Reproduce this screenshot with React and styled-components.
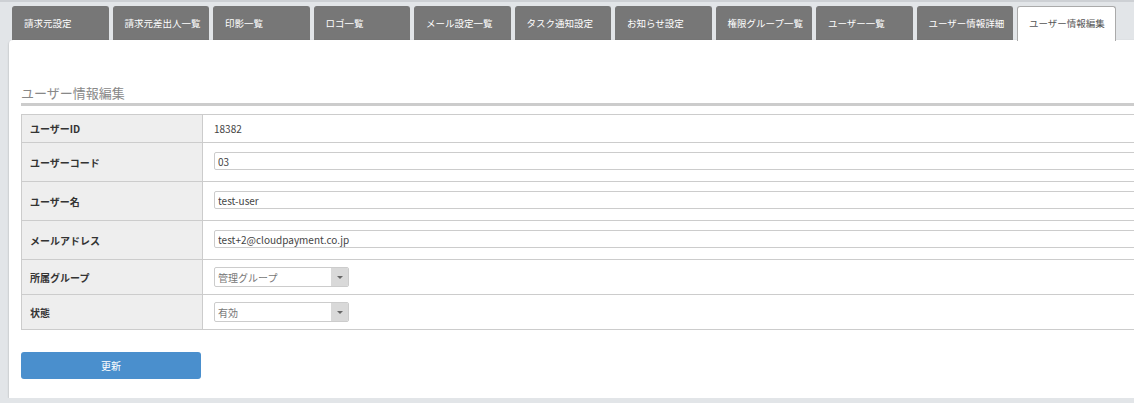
import styled, { createGlobalStyle } from "styled-components";

const GlobalStyle = createGlobalStyle`
  html, body {
    margin: 0;
    padding: 0;
    background: #e2e5e8;
    overflow: hidden;
  }
  body {
    font-family: "Noto Sans CJK JP", "Noto Sans", sans-serif;
    color: #333;
    border-top: 2px solid #cdd0d4;
  }
`;

const tabs = [
  "請求元設定",
  "請求元差出人一覧",
  "印影一覧",
  "ロゴ一覧",
  "メール設定一覧",
  "タスク通知設定",
  "お知らせ設定",
  "権限グループ一覧",
  "ユーザー一覧",
  "ユーザー情報詳細",
  "ユーザー情報編集",
];

export default function App() {
  return (
    <>
      <GlobalStyle />
      <StyledPage>
        <StyledTabBar>
          {tabs.map((tab, i) => (
            <StyledTab key={tab} $active={i === tabs.length - 1}>
              {tab}
            </StyledTab>
          ))}
        </StyledTabBar>
        <StyledPanel>
          <StyledHeading>ユーザー情報編集</StyledHeading>
          <StyledTable>
            <tbody>
              <StyledRow $height={28}>
                <StyledLabel>ユーザーID</StyledLabel>
                <StyledValue>18382</StyledValue>
              </StyledRow>
              <StyledRow $height={39}>
                <StyledLabel>ユーザーコード</StyledLabel>
                <StyledValue>
                  <StyledInput defaultValue="03" />
                </StyledValue>
              </StyledRow>
              <StyledRow $height={39}>
                <StyledLabel>ユーザー名</StyledLabel>
                <StyledValue>
                  <StyledInput defaultValue="test-user" />
                </StyledValue>
              </StyledRow>
              <StyledRow $height={39}>
                <StyledLabel>メールアドレス</StyledLabel>
                <StyledValue>
                  <StyledInput defaultValue="test+2@cloudpayment.co.jp" />
                </StyledValue>
              </StyledRow>
              <StyledRow $height={35}>
                <StyledLabel>所属グループ</StyledLabel>
                <StyledValue>
                  <StyledSelectWrap>
                    <StyledSelect defaultValue="admin">
                      <option value="admin">管理グループ</option>
                    </StyledSelect>
                    <StyledArrow />
                  </StyledSelectWrap>
                </StyledValue>
              </StyledRow>
              <StyledRow $height={35}>
                <StyledLabel>状態</StyledLabel>
                <StyledValue>
                  <StyledSelectWrap>
                    <StyledSelect defaultValue="on">
                      <option value="on">有効</option>
                    </StyledSelect>
                    <StyledArrow />
                  </StyledSelectWrap>
                </StyledValue>
              </StyledRow>
            </tbody>
          </StyledTable>
          <StyledButton>更新</StyledButton>
        </StyledPanel>
      </StyledPage>
    </>
  );
}

const StyledPage = styled.div`
  padding: 4px 0 0 9px;
  width: 1160px;
`;

const StyledTabBar = styled.div`
  display: flex;
  gap: 4px;
  padding-left: 3px;
`;

const StyledTab = styled.div`
  box-sizing: border-box;
  height: 35px;
  display: flex;
  align-items: center;
  padding: 0 0 3px 11px;
  font-size: 9.5px;
  border-radius: 3px 3px 0 0;
  background: ${(p) => (p.$active ? "#fff" : "#777")};
  color: ${(p) => (p.$active ? "#555" : "#fff")};
  border: 1px solid ${(p) => (p.$active ? "#aaa" : "#777")};
  border-bottom: none;
  margin-bottom: -1px;
  position: relative;
  z-index: ${(p) => (p.$active ? 2 : 0)};
  width: ${(p) => (p.$active ? "99px" : "96.5px")};
`;

const StyledPanel = styled.div`
  position: relative;
  z-index: 1;
  background: #fff;
  border-radius: 4px 0 0 0;
  box-shadow: 0 1px 2px rgba(0, 0, 0, 0.3);
  padding: 44px 12px 19px 12px;
`;

const StyledHeading = styled.h2`
  margin: 0;
  font-size: 13px;
  font-weight: normal;
  line-height: 17px;
  color: #888;
  padding-bottom: 2px;
  border-bottom: 3px solid #ccc;
`;

const StyledTable = styled.table`
  width: 100%;
  margin-top: 8px;
  border-collapse: collapse;
  font-size: 10px;
`;

const StyledRow = styled.tr`
  height: ${(p) => p.$height}px;
`;

const StyledLabel = styled.th`
  box-sizing: border-box;
  width: 181px;
  background: #eee;
  border: 1px solid #ccc;
  text-align: left;
  padding: 0 8px;
  font-weight: bold;
  color: #333;
`;

const StyledValue = styled.td`
  border: 1px solid #ccc;
  padding: 0 0 0 11px;
  color: #444;
`;

const StyledInput = styled.input`
  box-sizing: border-box;
  display: block;
  width: calc(100% - 11px);
  height: 18px;
  margin-top: -2px;
  border: 1px solid #ccc;
  border-radius: 2px;
  padding: 0 3px;
  font-family: inherit;
  font-size: 10px;
  color: #444;
  outline: none;
`;

const StyledSelectWrap = styled.div`
  position: relative;
  width: 135px;
  height: 20px;
`;

const StyledSelect = styled.select`
  appearance: none;
  box-sizing: border-box;
  width: 100%;
  height: 100%;
  border: 1px solid #ccc;
  border-radius: 2px;
  padding: 0 3px;
  background: #fff;
  font-family: inherit;
  font-size: 10px;
  color: #777;
  outline: none;
`;

const StyledArrow = styled.span`
  position: absolute;
  top: 1px;
  right: 1px;
  bottom: 1px;
  width: 17px;
  background: #d9d9d9;
  border-radius: 0 1px 1px 0;
  pointer-events: none;
  &::after {
    content: "";
    position: absolute;
    left: 6px;
    top: 8px;
    border-left: 3px solid transparent;
    border-right: 3px solid transparent;
    border-top: 3px solid #666;
  }
`;

const StyledButton = styled.button`
  display: block;
  margin-top: 22px;
  width: 180px;
  height: 27px;
  border: none;
  border-radius: 3px;
  background: #4a8fcd;
  color: #fff;
  font-family: inherit;
  font-size: 10px;
  cursor: pointer;
`;
